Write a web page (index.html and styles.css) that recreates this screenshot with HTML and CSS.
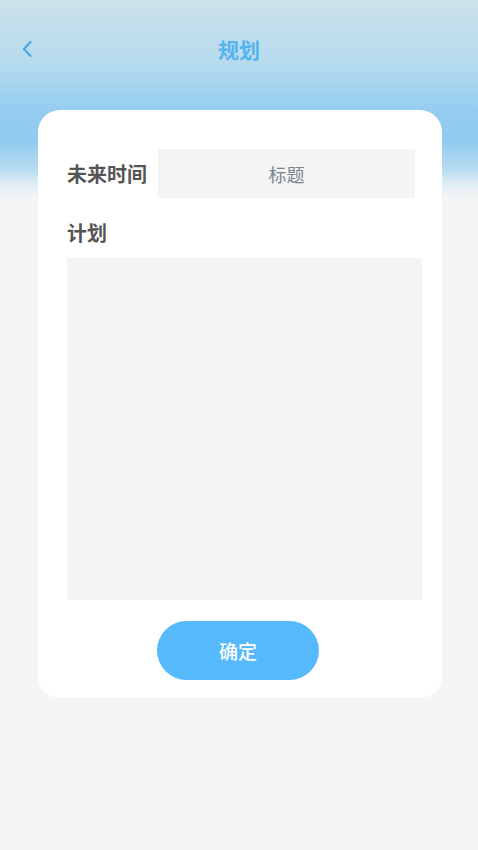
FILE: index.html
```html
<!DOCTYPE html>
<html lang="zh">
<head>
<meta charset="utf-8">
<link rel="stylesheet" href="styles.css">
</head>
<body>
<div class="page">
  <header class="topbar">
    <span class="back">
      <svg width="12" height="18" viewBox="0 0 12 18"><path d="M9.5 2 L3 9 L9.5 16" fill="none" stroke="#4aa8e2" stroke-width="2.2" stroke-linecap="round" stroke-linejoin="round"/></svg>
    </span>
    <h1 class="title">规划</h1>
  </header>
  <main class="card">
    <div class="row">
      <span class="label">未来时间</span>
      <div class="input">标题</div>
    </div>
    <div class="label plan-label">计划</div>
    <div class="textarea"></div>
    <div class="actions">
      <button class="confirm">确定</button>
    </div>
  </main>
</div>
</body>
</html>
```
FILE: styles.css
```css
* { box-sizing: border-box; }
html, body { margin: 0; padding: 0; }
body {
  font-family: "Noto Sans CJK SC", "Noto Sans", sans-serif;
  background: #f5f5f5;
}
.page {
  width: 478px;
  height: 850px;
  overflow: hidden;
  background: linear-gradient(to bottom,
    #cbe2ea 0px,
    #b7dbee 60px,
    #95cdf0 110px,
    #8fcaf0 140px,
    #b9dcf0 170px,
    #e8f0f4 188px,
    #f5f5f5 200px,
    #f5f5f5 100%);
  padding-top: 1px;
}
.topbar {
  position: relative;
  height: 99px;
  display: flex;
  align-items: center;
  justify-content: center;
}
.back {
  position: absolute;
  left: 21px;
  top: 39px;
  width: 12px;
  height: 18px;
  display: flex;
}
.title {
  margin: 0;
  font-size: 21px;
  font-weight: 700;
  color: #55b3ee;
  line-height: 1;
  margin-top: -2px;
}
.card {
  margin: 10px 0 0 38px;
  width: 404px;
  height: 588px;
  background: #fff;
  border-radius: 22px;
  padding: 39px 20px 0 29px;
  display: flex;
  flex-direction: column;
}
.row {
  display: flex;
  align-items: center;
  height: 49px;
}
.label {
  font-size: 20px;
  font-weight: 700;
  color: #555;
  line-height: 1;
}
.row .label {
  width: 91px;
  flex: none;
}
.input {
  width: 257px;
  height: 49px;
  background: #f4f4f4;
  display: flex;
  align-items: center;
  justify-content: center;
  font-size: 18px;
  color: #7a8590;
}
.plan-label {
  margin-top: 25px;
  height: 21px;
}
.textarea {
  margin-top: 14px;
  width: 355px;
  height: 342px;
  background: #f4f4f4;
}
.actions {
  margin-top: 21px;
  padding-left: 90px;
}
.confirm {
  width: 162px;
  height: 59px;
  border: none;
  border-radius: 30px;
  background: #55b9fb;
  color: #fff;
  font-family: "Noto Sans CJK SC", "Noto Sans", sans-serif;
  font-size: 19px;
  font-weight: 500;
  padding: 0;
}
```
